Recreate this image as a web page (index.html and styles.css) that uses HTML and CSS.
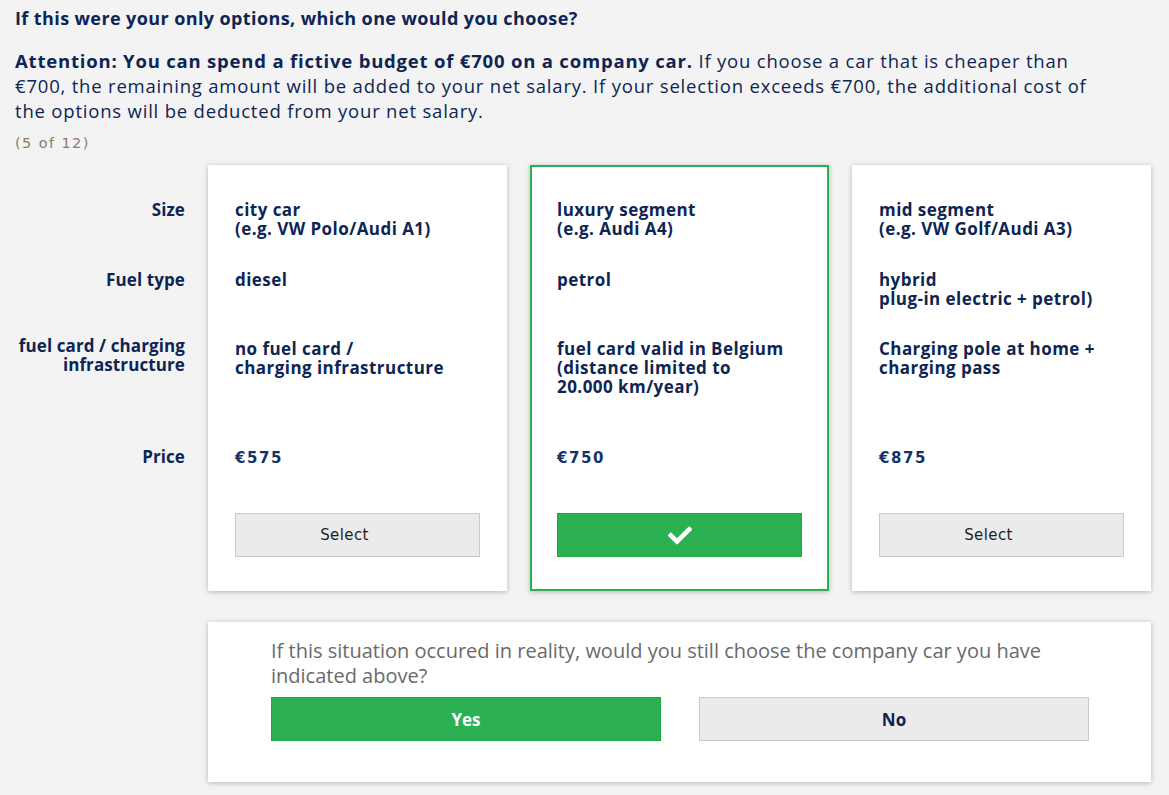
FILE: index.html
```html
<!DOCTYPE html>
<html lang="en">
<head>
    <meta charset="UTF-8">
    <meta name="viewport" content="width=device-width, initial-scale=1.0">
    <title>Company car choice</title>
    <link rel="stylesheet" href="styles.css">
</head>
<body>
    <div class="page">
        <h1 class="question">If this were your only options, which one would you choose?</h1>
        <p class="intro"><b>Attention: You can spend a fictive budget of €700 on a company car.</b> If you choose a car that is cheaper than €700, the remaining amount will be added to your net salary. If your selection exceeds €700, the additional cost of the options will be deducted from your net salary.</p>
        <div class="progress">(5 of 12)</div>

        <div class="choice-grid">
            <div class="labels">
                <div class="row row-size">Size</div>
                <div class="row row-fuel">Fuel type</div>
                <div class="row row-card">fuel card / charging<br>infrastructure</div>
                <div class="row row-price">Price</div>
            </div>

            <div class="card">
                <div class="row row-size">city car<br>(e.g. VW Polo/Audi A1)</div>
                <div class="row row-fuel">diesel</div>
                <div class="row row-card">no fuel card /<br>charging infrastructure</div>
                <div class="row row-price"><span class="price">€575</span></div>
                <button class="select-btn">Select</button>
            </div>

            <div class="card selected">
                <div class="row row-size">luxury segment<br>(e.g. Audi A4)</div>
                <div class="row row-fuel">petrol</div>
                <div class="row row-card">fuel card valid in Belgium<br>(distance limited to<br>20.000 km/year)</div>
                <div class="row row-price"><span class="price">€750</span></div>
                <button class="select-btn">
                    <svg class="check" viewBox="0 0 512 400" width="24" height="19"><path fill="#fff" d="M173.9 383.4l-166.4-166.4c-10-10-10-26.2 0-36.2l36.2-36.2c10-10 26.2-10 36.2 0L192 256.7 432.1 16.6c10-10 26.2-10 36.2 0l36.2 36.2c10 10 10 26.2 0 36.2l-294.4 294.4c-10 10-26.2 10-36.2 0z"/></svg>
                </button>
            </div>

            <div class="card">
                <div class="row row-size">mid segment<br>(e.g. VW Golf/Audi A3)</div>
                <div class="row row-fuel">hybrid<br>plug-in electric + petrol)</div>
                <div class="row row-card">Charging pole at home +<br>charging pass</div>
                <div class="row row-price"><span class="price">€875</span></div>
                <button class="select-btn">Select</button>
            </div>
        </div>

        <div class="reality">
            <p>If this situation occured in reality, would you still choose the company car you have indicated above?</p>
            <div class="answers">
                <button class="answer yes">Yes</button>
                <button class="answer">No</button>
            </div>
        </div>
    </div>
</body>
</html>
```

FILE: styles.css
```css
body {
	margin: 0;
	background: #f3f3f3;
	font-family: "Open Sans", "Liberation Sans", sans-serif;
	color: #0e2553;
}

.page {
	padding: 6px 18px 12px 15px;
}

.question {
	font-size: 18px;
	line-height: 24px;
	font-weight: 700;
	letter-spacing: 0.4px;
	margin: 0 0 18px 0;
}

.intro {
	font-size: 18.5px;
	line-height: 25px;
	letter-spacing: 0.8px;
	margin: 0 0 10px 0;
	max-width: 1085px;
}

.progress {
	font-family: "DejaVu Sans", Verdana, sans-serif;
	font-size: 14.5px;
	line-height: 20px;
	letter-spacing: 1.4px;
	color: #8c7b68;
	margin-bottom: 12px;
}

.choice-grid {
	display: grid;
	grid-template-columns: 170px 299px 299px 299px;
	column-gap: 23px;
}

.labels {
	padding-top: 35px;
	text-align: right;
	white-space: nowrap;
	font-weight: 700;
	font-size: 17px;
	line-height: 19px;
	letter-spacing: 0.1px;
}

.labels .row-card {
	margin-top: -3px;
	height: 111px;
}

.card {
	background: #fff;
	border: 2px solid #fff;
	box-shadow: 0 1px 5px rgba(0, 0, 0, 0.25);
	padding: 33px 25px 32px 25px;
	font-weight: 700;
	font-size: 17px;
	line-height: 19px;
	letter-spacing: 0.45px;
}

.card.selected {
	border-color: #2bb04f;
}

.row-size {
	height: 70px;
}

.row-fuel {
	height: 69px;
}

.row-card {
	height: 108px;
}

.row-price {
	height: 66px;
}

.price {
	font-family: "DejaVu Sans", Verdana, sans-serif;
	font-size: 15px;
	letter-spacing: 1.6px;
	color: #13336b;
}

.select-btn {
	display: flex;
	align-items: center;
	justify-content: center;
	width: 100%;
	height: 44px;
	margin: 0;
	padding: 0 26px 0 0;
	background: #ebebeb;
	border: 1px solid #cbcbcb;
	font-family: "DejaVu Sans", Verdana, sans-serif;
	font-size: 15px;
	color: #1e1e1e;
	letter-spacing: 0.4px;
	cursor: pointer;
}

.selected .select-btn {
	padding: 0;
	background: #2bb052;
	border-color: #22a447;
}

.reality {
	background: #fff;
	box-shadow: 0 1px 5px rgba(0, 0, 0, 0.25);
	margin: 31px 0 0 193px;
	padding: 16px 62px 41px 63px;
}

.reality p {
	margin: 0 0 9px 0;
	font-family: "Liberation Sans Narrow", "Open Sans", sans-serif;
	font-size: 20px;
	line-height: 25px;
	color: #6a6a6a;
}

.answers {
	display: flex;
	gap: 38px;
}

.answer {
	flex: 1;
	height: 44px;
	background: #ebebeb;
	border: 1px solid #cbcbcb;
	font-family: "Open Sans", sans-serif;
	font-weight: 700;
	font-size: 17px;
	color: #0e2553;
	cursor: pointer;
}

.answer.yes {
	background: #2bb052;
	border-color: #22a447;
	color: #fff;
}
```
